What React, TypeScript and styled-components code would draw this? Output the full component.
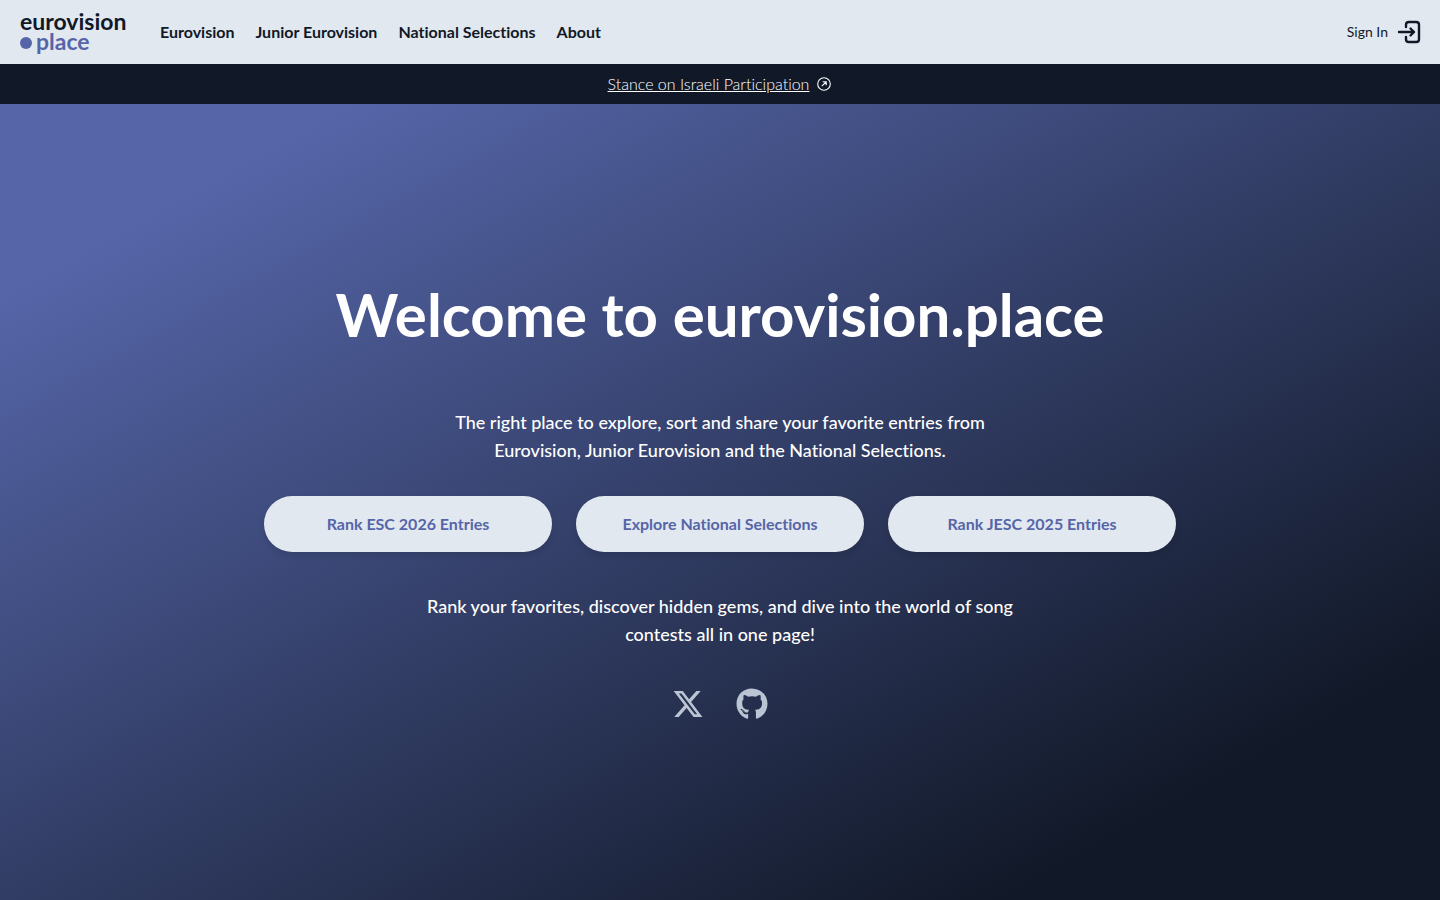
import React from 'react';
import styled, { createGlobalStyle } from 'styled-components';
import { FaGithub, FaXTwitter } from 'react-icons/fa6';

const GlobalStyle = createGlobalStyle`
  *, *::before, *::after { box-sizing: border-box; }
  body {
    margin: 0;
    background: #111827;
    color: #111827;
    font-family: Lato, 'Liberation Sans', sans-serif;
    font-size: 16px;
    font-variant-ligatures: none;
    line-height: 24px;
  }
  h1, p { margin: 0; }
  a { color: inherit; text-decoration: none; }
`;

const Page = styled.div`
  display: flex;
  flex-direction: column;
  min-height: 100vh;
`;

const Header = styled.header`
  display: flex;
  align-items: center;
  height: 64px;
  padding: 0 17px 0 20px;
  background: #e2e8f0;
`;

const Logo = styled.a`
  display: flex;
  flex-direction: column;
  width: 140px;
  padding-bottom: 3px;
  font-size: 23px;
  font-weight: 700;
  line-height: 20px;
`;

const LogoPlace = styled.span`
  display: flex;
  align-items: center;
  gap: 4px;
  color: #5565a8;
`;

const LogoDot = styled.span`
  width: 12px;
  height: 12px;
  margin-top: 4px;
  border-radius: 50%;
  background: #5565a8;
`;

const Nav = styled.nav`
  display: flex;
  flex: 1;
  gap: 21px;
  font-weight: 700;
`;

const SignIn = styled.button`
  display: flex;
  align-items: center;
  gap: 9px;
  padding: 0;
  border: 0;
  background: none;
  color: #111827;
  font: inherit;
  font-size: 14px;
  cursor: pointer;
`;

const Banner = styled.div`
  display: flex;
  align-items: center;
  justify-content: center;
  height: 40px;
  background: #111827;
  color: #fff;
`;

const BannerLink = styled.a`
  display: flex;
  align-items: center;
  gap: 7px;
  font-weight: 300;
`;

const BannerText = styled.span`
  text-decoration: underline;
`;

const Hero = styled.main`
  display: flex;
  flex: 1;
  flex-direction: column;
  align-items: center;
  justify-content: center;
  padding: 32px 24px;
  background: linear-gradient(to bottom right, #5565a8 12%, #111827 85%);
  color: #fff;
  text-align: center;
`;

const Title = styled.h1`
  margin-bottom: 64px;
  font-size: 60px;
  font-weight: 700;
  line-height: 60px;
`;

const Lead = styled.p`
  max-width: 596px;
  font-size: 18px;
  font-weight: 500;
  line-height: 28px;
`;

const Actions = styled.div`
  display: flex;
  flex-wrap: wrap;
  justify-content: center;
  gap: 24px;
  margin: 32px 0 40px;
`;

const ActionButton = styled.button`
  width: 288px;
  height: 56px;
  border: 0;
  border-radius: 28px;
  background: #e2e8f0;
  box-shadow: 0 4px 6px rgba(0, 0, 0, 0.1);
  color: #5565a8;
  font: inherit;
  font-variant-ligatures: none;
  font-weight: 700;
  cursor: pointer;
`;

const Socials = styled.div`
  display: flex;
  gap: 32px;
  margin-top: 40px;
  color: #cbd5e1;
`;

const SocialLink = styled.a`
  display: flex;
  opacity: 0.9;
`;

const navItems = ['Eurovision', 'Junior Eurovision', 'National Selections', 'About'];
const actions = ['Rank ESC 2026 Entries', 'Explore National Selections', 'Rank JESC 2025 Entries'];

const EnterIcon = () => (
  <svg width="26" height="26" viewBox="0 0 26 26" fill="none" stroke="currentColor" strokeWidth="2.4" strokeLinecap="round" strokeLinejoin="round" aria-hidden="true">
    <path d="M9 8V5.8Q9 3 11.8 3H19.2Q22 3 22 5.8V20.2Q22 23 19.2 23H11.8Q9 23 9 20.2V18" />
    <path d="M2 13H17M13.5 9.5L17 13L13.5 16.5" />
  </svg>
);

const ExternalIcon = () => (
  <svg width="16" height="16" viewBox="0 0 16 16" fill="none" stroke="currentColor" strokeWidth="1.1" aria-hidden="true">
    <circle cx="8" cy="8" r="6.3" />
    <path d="M5.8 10.2L10 6M6.7 5.8H10.2V9.3" />
  </svg>
);

export default function App() {
  return (
    <Page>
      <GlobalStyle />
      <Header>
        <Logo href="#">
          <span>eurovision</span>
          <LogoPlace><LogoDot />place</LogoPlace>
        </Logo>
        <Nav>
          {navItems.map((item) => <a key={item} href="#">{item}</a>)}
        </Nav>
        <SignIn type="button">Sign In<EnterIcon /></SignIn>
      </Header>
      <Banner>
        <BannerLink href="#"><BannerText>Stance on Israeli Participation</BannerText><ExternalIcon /></BannerLink>
      </Banner>
      <Hero>
        <Title>Welcome to eurovision.place</Title>
        <Lead>The right place to explore, sort and share your favorite entries from Eurovision, Junior Eurovision and the National Selections.</Lead>
        <Actions>
          {actions.map((action) => <ActionButton key={action} type="button">{action}</ActionButton>)}
        </Actions>
        <Lead>Rank your favorites, discover hidden gems, and dive into the world of song contests all in one page!</Lead>
        <Socials>
          <SocialLink href="#" aria-label="X"><FaXTwitter size={32} /></SocialLink>
          <SocialLink href="#" aria-label="GitHub"><FaGithub size={32} /></SocialLink>
        </Socials>
      </Hero>
    </Page>
  );
}
